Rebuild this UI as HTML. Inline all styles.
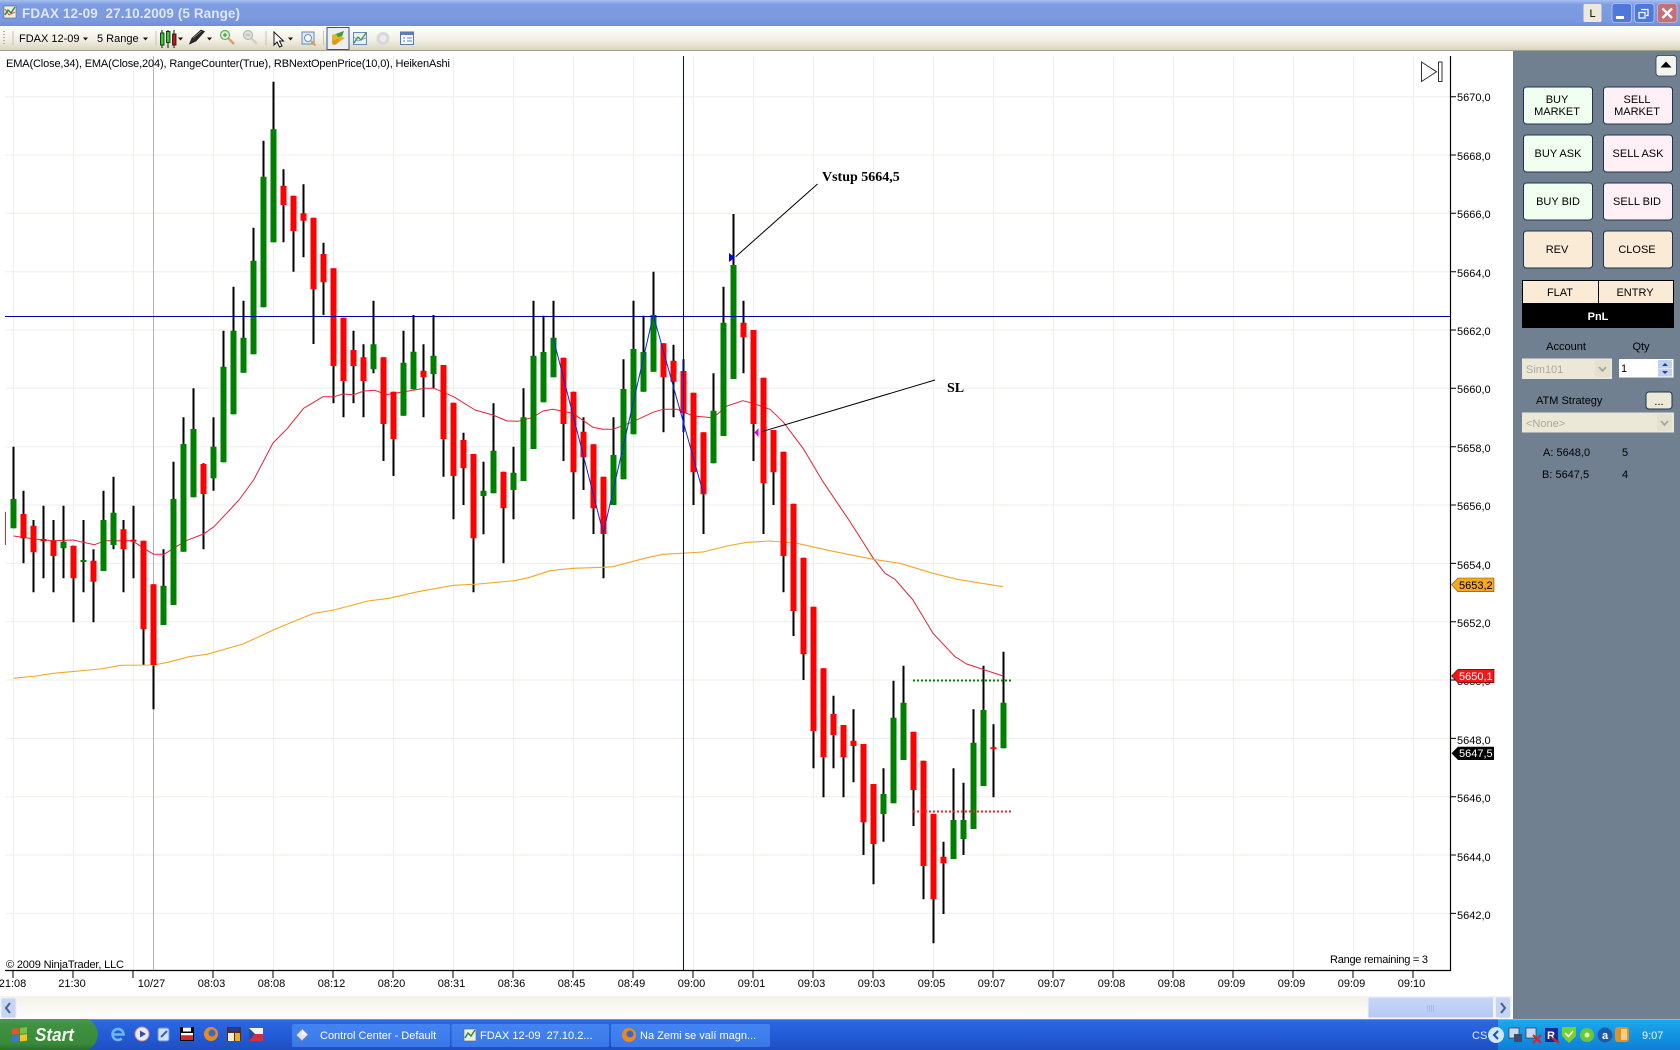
<!DOCTYPE html>
<html>
<head>
<meta charset="utf-8">
<title>FDAX 12-09</title>
<style>
html,body{margin:0;padding:0;background:#fff;width:1680px;height:1050px;overflow:hidden}
svg{display:block;position:absolute;left:0;top:0}
text{font-family:"Liberation Sans",sans-serif;font-size:11px;fill:#000}
.m{text-anchor:middle}
</style>
</head>
<body>
<svg width="1680" height="1050" viewBox="0 0 1680 1050" xmlns="http://www.w3.org/2000/svg">
<defs>
<linearGradient id="tb" x1="0" y1="0" x2="0" y2="1"><stop offset="0" stop-color="#a8c0f0"/><stop offset=".18" stop-color="#7d9ce2"/><stop offset=".8" stop-color="#7a98de"/><stop offset="1" stop-color="#6f8ed8"/></linearGradient>
<linearGradient id="tool" x1="0" y1="0" x2="0" y2="1"><stop offset="0" stop-color="#fefdfa"/><stop offset=".55" stop-color="#f3f1e6"/><stop offset="1" stop-color="#d9d5c2"/></linearGradient>
<linearGradient id="task" x1="0" y1="0" x2="0" y2="1"><stop offset="0" stop-color="#2f71e8"/><stop offset=".12" stop-color="#2a66de"/><stop offset=".5" stop-color="#245cd8"/><stop offset="1" stop-color="#1f4fc0"/></linearGradient>
<linearGradient id="start" x1="0" y1="0" x2="0" y2="1"><stop offset="0" stop-color="#4b9a4b"/><stop offset=".2" stop-color="#3f9040"/><stop offset=".8" stop-color="#398a3a"/><stop offset="1" stop-color="#2a6f2d"/></linearGradient>
<linearGradient id="tray" x1="0" y1="0" x2="0" y2="1"><stop offset="0" stop-color="#1fa9ec"/><stop offset=".5" stop-color="#1296e4"/><stop offset="1" stop-color="#0f7fd6"/></linearGradient>
<linearGradient id="tbtn" x1="0" y1="0" x2="0" y2="1"><stop offset="0" stop-color="#4484f0"/><stop offset="1" stop-color="#3a78ea"/></linearGradient>
<linearGradient id="sb" x1="0" y1="0" x2="0" y2="1"><stop offset="0" stop-color="#f3f1e8"/><stop offset="1" stop-color="#fefefc"/></linearGradient>
<linearGradient id="thumb" x1="0" y1="0" x2="0" y2="1"><stop offset="0" stop-color="#c8d7f7"/><stop offset="1" stop-color="#b5c9f4"/></linearGradient>
</defs>

<rect width="1680" height="1050" fill="#fff"/>

<!-- grid -->
<path d="M5 96.7H1450M5 155H1450M5 213.3H1450M5 271.7H1450M5 330H1450M5 388.3H1450M5 446.7H1450M5 505H1450M5 563.4H1450M5 621.7H1450M5 680H1450M5 738.4H1450M5 796.7H1450M5 855H1450M5 913.4H1450" stroke="#efeee8" stroke-width="1" fill="none"/>
<path d="M13.5 56V970M73.5 56V970M133.5 56V970M213.5 56V970M273.5 56V970M333.5 56V970M393.5 56V970M453.5 56V970M513.5 56V970M573.5 56V970M633.5 56V970M693.5 56V970M753.5 56V970M813.5 56V970M873.5 56V970M933.5 56V970M993.5 56V970M1053.5 56V970M1113.5 56V970M1173.5 56V970M1233.5 56V970M1293.5 56V970M1353.5 56V970M1413.5 56V970" stroke="#efeee8" stroke-width="1" fill="none"/>
<path d="M153.5 56V970" stroke="#b4b4b4" stroke-width="1"/>

<!-- wicks -->
<path fill="none" stroke="#000" stroke-width="2" d="M13.5 446.7V528.3M23.5 490.7V563.3M33.5 520V592.3M43.5 505.7V578.3M53.5 520V592.3M63.5 505.7V578.3M73.5 545.7V622.3M83.5 520V592.3M93.5 549.3V622.3M103.5 490.7V571M113.5 476.7V549.3M123.5 520V592.3M133.5 505.7V578.3M143.5 540.7V665M153.5 584.3V709.3M163.5 549.3V625M173.5 461.7V605M183.5 417.3V551.7M193.5 388.3V497.3M203.5 463.3V549.3M213.5 417.3V490.7M223.5 330.7V462.3M233.5 286.7V414.3M243.5 300.7V372.7M253.5 227.7V354.3M263.5 140.7V307.3M273.5 81.7V242.3M283.5 169.3V242.3M293.5 195.7V271.7M303.5 184.3V257.3M313.5 217.7V344M323.5 242.7V315M333.5 268.3V403.3M343.5 317.7V417.3M353.5 330.7V403.3M363.5 344.3V417.3M373.5 300.7V373.3M383.5 357.3V461M393.5 391.7V476M403.5 330.7V415.7M413.5 315V389.3M423.5 344.3V417.3M433.5 315V388.3M443.5 365V476.7M453.5 402.7V519.3M463.5 432.7V505M473.5 454V592.3M483.5 461.7V534.3M493.5 403.3V493.3M503.5 471.7V563.3M513.5 446.7V519.3M523.5 388.3V481M533.5 300.7V449M543.5 315.7V402.3M553.5 300.7V377.3M563.5 357.7V461M573.5 391.7V519.3M583.5 417.3V490M593.5 444.3V534M603.5 476.7V578.3M613.5 417.3V505M623.5 359.3V479.3M633.5 300.7V434.3M643.5 315.7V391.7M653.5 271.7V371.7M663.5 343.3V432.3M673.5 344.7V417.3M683.5 359.3V432.3M693.5 392.7V505M703.5 432.3V534M713.5 373.3V463.3M723.5 286.7V436M733.5 214V379M743.5 300.7V373.3M753.5 330V461M763.5 377.7V534M773.5 430V505M783.5 451.7V592.3M793.5 503.7V636M803.5 557.7V680M813.5 606.7V768.3M823.5 668.3V797.3M833.5 695.7V768.3M843.5 725V797.3M853.5 709.3V782.3M863.5 744V855M873.5 784V884.3M883.5 768.3V841.7M893.5 680.7V803.3M903.5 665.7V760M913.5 731.7V826M923.5 760.7V899.3M933.5 814V943.3M943.5 841.7V914M953.5 768.3V859M963.5 782.7V855M973.5 709.3V829M983.5 665.7V786M993.5 724.3V797.3M1003.5 651.7V748.3"/>

<!-- EMA lines -->
<path fill="none" stroke="#e2223a" stroke-width="1" stroke-linejoin="round" d="M13.6 536L36 539.3L53.6 540.7L73 540L94.6 544.7L105 540.7L132 540.7L153.6 554.3L164 554.3L186 540.7L203.6 534L214 526.7L239 500L253.6 480L273 443L287.5 428.3L303.6 408.3L323 396.7L334 396.7L343 394L353.6 394.7L364 391L375 390.3L386 394.7L407 391.3L425 388.3L434 388.3L453.6 396.7L475 410L493 415L507 421L518 421.3L532 417.7L543 411L553 409.3L573 413.3L593 427.3L603 429.3L613 429.3L633 421.7L653 412.3L663 409.3L677 409.3L693 416L713 417.7L727 406L743 400.7L753 403.3L770 409.3L783 421.7L803 448.3L823 481.7L850 521.7L861.7 540L873.3 558.3L885 573.3L895 579.3L913 600L933 633.3L955 656.7L966.7 664L1003 676"/>
<path fill="none" stroke="#f2a825" stroke-width="1.1" stroke-linejoin="round" d="M13.6 678.3L36 676L53.6 673.3L100 669L121.4 665.3L153.6 665L168 662.3L189 656.7L207 654.3L243 644L275 629.3L293 621.7L314 613.3L334 610L368 601L389 598.3L418 591.7L453.6 585.3L478.6 584L514 580.7L530 577.3L550 570.7L573 568.3L603 567.3L613 566.7L647 557.7L663 554.3L703 552L727 546L747 542.3L770 541L797 543.3L830 550.7L873 559.3L900 563.3L933 573.3L957 579.3L1003 586.7"/>

<!-- partial bar -->
<path d="M5.5 511.7V545" stroke="#e03030" stroke-width="1"/>

<!-- bodies -->
<path fill="none" stroke="#008000" stroke-width="6" d="M13.5 499V528.3M63.5 541.7V548.3M83.5 560V562M103.5 520V571M113.5 512.7V545M163.5 585.7V625M173.5 499V605M183.5 444V551.7M193.5 429V497.3M213.5 446.7V478.3M223.5 366.7V462.3M233.5 330.7V414.3M243.5 337.7V372.7M253.5 260.7V354.3M263.5 176.7V307.3M273.5 129.3V242.3M373.5 344.3V369.3M403.5 362.7V415.7M413.5 351.7V389.3M433.5 355.7V374M483.5 490.7V496M493.5 450.7V493.3M513.5 472.7V490M523.5 417.3V481M533.5 355.7V449M543.5 352V402.3M553.5 337.7V377.3M613.5 455V505M623.5 389V479.3M633.5 349V434.3M643.5 352V391.7M653.5 315V371.7M713.5 410.7V463.3M723.5 322.7V436M733.5 265V379M883.5 794V814M893.5 717.7V803.3M903.5 702.7V760M953.5 820V859M963.5 820V839M973.5 742.7V829M983.5 710V786M1003.5 702.7V748.3"/>
<path fill="none" stroke="#ff0000" stroke-width="6" d="M23.5 514V538.3M33.5 525.7V552.3M43.5 539V541.3M53.5 540.7V556M73.5 545.7V578.3M93.5 560.7V581.7M123.5 529.3V549.3M133.5 539.7V541.7M143.5 540.7V629.3M153.5 584.3V665M203.5 464V494M283.5 185.7V205M293.5 195.7V231M303.5 213.3V220.7M313.5 217.7V289.3M323.5 254V282.3M333.5 268.3V366M343.5 317.7V381M353.5 350V366M363.5 357.3V381M383.5 357.3V424M393.5 391.7V439M423.5 370.7V377.3M443.5 365V439M453.5 402.7V476M463.5 440V468.3M473.5 454V538.3M503.5 471.7V508.3M563.5 357.7V424M573.5 391.7V472.3M583.5 431.7V457.3M593.5 444.3V508.3M603.5 476.7V534M663.5 343.3V377.3M673.5 360.7V381.7M683.5 371V413.3M693.5 392.7V472.3M703.5 432.3V494.3M743.5 322.7V337.3M753.5 330V424M763.5 377.7V483.3M773.5 430V472.3M783.5 451.7V556M793.5 503.7V611M803.5 557.7V654.3M813.5 606.7V731M823.5 668.3V757.3M833.5 714V735M843.5 725V757.3M853.5 740.7V746M863.5 744V822.3M873.5 784V844M913.5 731.7V790M923.5 760.7V866M933.5 814V899.3M943.5 856.7V863.3M993.5 747.3V749.3"/>

<!-- horizontal and vertical markers -->
<path d="M5 316.5H1450" stroke="#0000a0" stroke-width="1"/>
<path d="M683.5 56V970" stroke="#0000c8" stroke-width="1"/>
<!-- zigzag -->
<path d="M553.3 338.3L603.3 533.3L653.3 315L703.3 493.3" fill="none" stroke="#0a2ae0" stroke-width="1"/>

<!-- dotted lines -->
<path d="M913 680.5H1012" stroke="#008000" stroke-width="2" stroke-dasharray="2 2"/>
<path d="M913 811.5H1012" stroke="#ff2020" stroke-width="2" stroke-dasharray="2 2"/>

<!-- annotations -->
<path d="M735.7 256.7L817.5 184" stroke="#000" stroke-width="1" fill="none"/>
<path d="M761.7 431.7L935 380" stroke="#000" stroke-width="1" fill="none"/>
<path d="M729 253L735 257.5L729 262Z" fill="#0000e0"/>
<path d="M758.5 428L754.5 432.5L758.5 437Z" fill="#e000e0"/>
<text x="822" y="181" style="font-family:'Liberation Serif',serif;font-size:14px;font-weight:bold">Vstup 5664,5</text>
<text x="947" y="392" style="font-family:'Liberation Serif',serif;font-size:14px;font-weight:bold">SL</text>

<!-- indicator text -->
<text x="6" y="67" textLength="444" lengthAdjust="spacing">EMA(Close,34), EMA(Close,204), RangeCounter(True), RBNextOpenPrice(10,0), HeikenAshi</text>
<text x="6" y="968" textLength="118" lengthAdjust="spacing">© 2009 NinjaTrader, LLC</text>
<text x="1330" y="963" textLength="98" lengthAdjust="spacing">Range remaining = 3</text>

<!-- go-to-end icon -->
<path d="M1421.5 62L1436.5 71.8L1421.5 81.5Z" fill="#fff" stroke="#333" stroke-width="1"/>
<rect x="1438.5" y="62" width="3.5" height="19.5" fill="#fff" stroke="#333" stroke-width="1"/>

<!-- axes -->
<path d="M1450.5 56V970.5H5" fill="none" stroke="#000" stroke-width="1.2"/>
<path d="M1451 96.7h5M1451 155h5M1451 213.3h5M1451 271.7h5M1451 330h5M1451 388.3h5M1451 446.7h5M1451 505h5M1451 563.4h5M1451 621.7h5M1451 680h5M1451 738.4h5M1451 796.7h5M1451 855h5M1451 913.4h5" stroke="#000" stroke-width="1"/>
<g>
<text x="1457" y="101">5670,0</text><text x="1457" y="160">5668,0</text><text x="1457" y="218">5666,0</text><text x="1457" y="277">5664,0</text><text x="1457" y="335">5662,0</text><text x="1457" y="393">5660,0</text><text x="1457" y="452">5658,0</text><text x="1457" y="510">5656,0</text><text x="1457" y="569">5654,0</text><text x="1457" y="627">5652,0</text><text x="1457" y="685">5650,0</text><text x="1457" y="744">5648,0</text><text x="1457" y="802">5646,0</text><text x="1457" y="861">5644,0</text><text x="1457" y="919">5642,0</text>
</g>
<!-- price markers -->
<path d="M1451.5 584.8L1458 578H1494V591.7H1458Z" fill="#f5a623" stroke="#7a5200" stroke-width=".6"/>
<text x="1459" y="589">5653,2</text>
<path d="M1451.5 676L1458 669.3H1494V682.7H1458Z" fill="#f01818" stroke="#500" stroke-width=".6"/>
<text x="1459" y="680" style="fill:#fff">5650,1</text>
<path d="M1451.5 753.3L1458 746.7H1494V760H1458Z" fill="#000"/>
<text x="1459" y="757" style="fill:#fff">5647,5</text>

<!-- x axis ticks and labels -->
<path d="M13 971v7M73 971v7M133 971v7M213 971v7M273 971v7M333 971v7M393 971v7M453 971v7M513 971v7M573 971v7M633 971v7M693 971v7M753 971v7M813 971v7M873 971v7M933 971v7M993 971v7M1053 971v7M1113 971v7M1173 971v7M1233 971v7M1293 971v7M1353 971v7M1413 971v7" stroke="#000" stroke-width="1"/>
<g class="m" text-anchor="middle">
<text x="12.5" y="987">21:08</text><text x="72" y="987">21:30</text><text x="151.5" y="987">10/27</text><text x="211.5" y="987">08:03</text><text x="271.5" y="987">08:08</text><text x="331.5" y="987">08:12</text><text x="391.5" y="987">08:20</text><text x="451.5" y="987">08:31</text><text x="511.5" y="987">08:36</text><text x="571.5" y="987">08:45</text><text x="631.5" y="987">08:49</text><text x="691.5" y="987">09:00</text><text x="751.5" y="987">09:01</text><text x="811.5" y="987">09:03</text><text x="871.5" y="987">09:03</text><text x="931.5" y="987">09:05</text><text x="991.5" y="987">09:07</text><text x="1051.5" y="987">09:07</text><text x="1111.5" y="987">09:08</text><text x="1171.5" y="987">09:08</text><text x="1231.5" y="987">09:09</text><text x="1291.5" y="987">09:09</text><text x="1351.5" y="987">09:09</text><text x="1411.5" y="987">09:10</text>
</g>

<!-- scrollbar -->
<rect x="0" y="996" width="1512" height="23" fill="url(#sb)"/>
<rect x="1" y="998" width="15" height="20" rx="2" fill="#c6d5f3" stroke="#e8eefb"/>
<path d="M10 1003L6 1008L10 1013" fill="none" stroke="#4d6185" stroke-width="2"/>
<rect x="1368" y="997" width="125.5" height="21" rx="1" fill="url(#thumb)" stroke="#eef2fc"/>
<path d="M1427.5 1005v7M1429.5 1005v7M1431.5 1005v7M1433.5 1005v7" stroke="#a8bce8" stroke-width="1"/>
<rect x="1495.5" y="997" width="15" height="21" rx="2" fill="#c6d5f3" stroke="#e8eefb"/>
<path d="M1501 1003L1505 1008L1501 1013" fill="none" stroke="#4d6185" stroke-width="2"/>

<!-- title bar -->
<rect x="0" y="0" width="1680" height="26" fill="url(#tb)"/>
<rect x="4" y="6" width="12" height="12" fill="#e8f0e0" stroke="#667" stroke-width=".6"/>
<path d="M5 15L8 10L11 13L15 7" fill="none" stroke="#2a8a3a" stroke-width="1.4"/>
<path d="M5 9L9 15L15 12" fill="none" stroke="#d33" stroke-width=".8"/>
<text x="22" y="18" textLength="218" lengthAdjust="spacing" style="font-size:13.5px;font-weight:bold;fill:#dfe8fb" xml:space="preserve">FDAX 12-09  27.10.2009 (5 Range)</text>
<rect x="1583.5" y="4" width="18" height="18" rx="1.5" fill="#ece9d8"/>
<text x="1592.5" y="17" text-anchor="middle">L</text>
<rect x="1612" y="3.5" width="19.5" height="19" rx="3" fill="#4f78d8" stroke="#b6c9f2" stroke-width=".8"/>
<rect x="1616" y="16" width="8" height="3" fill="#fff"/>
<rect x="1634.5" y="3.5" width="19.5" height="19" rx="3" fill="#4f78d8" stroke="#b6c9f2" stroke-width=".8"/>
<path d="M1641 9.5h7v6h-2M1639 12.5h6v5.5h-6z" fill="none" stroke="#fff" stroke-width="1.2"/>
<rect x="1657.5" y="3.5" width="19.5" height="19" rx="3" fill="#c4707c" stroke="#e0b8c0" stroke-width=".8"/>
<path d="M1662.5 8.5L1672 18M1672 8.5L1662.5 18" stroke="#fff" stroke-width="2.4"/>

<!-- toolbar -->
<rect x="0" y="26" width="1680" height="24" fill="url(#tool)"/>
<rect x="0" y="50" width="1680" height="1" fill="#a5a18d"/>
<path d="M4 31v1M4 34v1M4 37v1M4 40v1M4 43v1" stroke="#b5b19e" stroke-width="2"/>
<path d="M13 31V45M156 31V45M266 31V45M323.5 31V45" stroke="#c8c4b0" stroke-width="1"/>
<text x="19" y="42">FDAX 12-09</text>
<text x="97" y="42">5 Range</text>
<path d="M83 37.5h5l-2.5 3zM143 37.5h5l-2.5 3zM178 37.5h5l-2.5 3zM207 37.5h5l-2.5 3zM288 37.5h5l-2.5 3z" fill="#111"/>
<!-- candles icon -->
<path d="M162 30v18M168 30v18M174 30v18" stroke="#111" stroke-width="1"/>
<rect x="160.5" y="33" width="3.5" height="12" fill="#2fd02f" stroke="#111" stroke-width=".8"/>
<rect x="166.5" y="31.5" width="3.5" height="11" fill="#2fd02f" stroke="#111" stroke-width=".8"/>
<rect x="172.5" y="34" width="3.5" height="11" fill="#c01818" stroke="#111" stroke-width=".8"/>
<!-- pencil -->
<path d="M189.5 44L192 38L201 30L204.5 31.5L196 41Z" fill="#2a2a2a" stroke="#111" stroke-width=".6"/>
<path d="M193 38L201.5 31" stroke="#999" stroke-width=".8"/>
<!-- zoom in -->
<circle cx="225" cy="35" r="4.5" fill="#d8efd0" stroke="#6aa870" stroke-width="1.2"/>
<path d="M223 35h4M225 33v4" stroke="#2a8a2a" stroke-width="1"/>
<path d="M228.5 38.5L234 44" stroke="#e0a060" stroke-width="2.4"/>
<!-- zoom out -->
<circle cx="248" cy="35" r="4.5" fill="#dededa" stroke="#b8b8b4" stroke-width="1.2"/>
<path d="M246 35h4" stroke="#aaa" stroke-width="1"/>
<path d="M251.5 38.5L257 44" stroke="#cfcfc8" stroke-width="2.4"/>
<!-- cursor -->
<path d="M274 32V45L277 42L279.5 47L282 46L279.5 41L283.5 41Z" fill="#fff" stroke="#111" stroke-width="1"/>
<!-- preview -->
<rect x="302" y="32" width="12" height="12" fill="#dfe9f5" stroke="#6a87ad" stroke-width="1"/>
<circle cx="308" cy="38" r="3.5" fill="#f5f8fc" stroke="#7590b5" stroke-width="1"/>
<path d="M311 41L315.5 45.5" stroke="#e09a50" stroke-width="2"/>
<!-- toggled -->
<rect x="327" y="27.500" width="22" height="22" fill="#eceef2" stroke="#31568c" stroke-width="1"/>
<path d="M332 35L344 31L342 37L345 38L335 45L332 44Z" fill="#e2b528"/>
<path d="M336 34L344 31L342 36L338 37Z" fill="#3aa03a"/>
<path d="M332 41L340 38L338 43L333 45Z" fill="#d89a20"/>
<!-- chart -->
<rect x="353.5" y="32.5" width="13" height="12" fill="#eaf1fa" stroke="#6d88b5" stroke-width="1"/>
<path d="M354 43L358 37L361 40L366 33" fill="none" stroke="#2e9a3e" stroke-width="1.3"/>
<path d="M354 37L358 41L366 38" fill="none" stroke="#7a7ad0" stroke-width=".7"/>
<!-- circle -->
<circle cx="383" cy="38.5" r="6.5" fill="#d8d8d6"/>
<circle cx="383" cy="38.5" r="3.5" fill="#ebebe9"/>
<!-- grid -->
<rect x="400.5" y="32" width="13" height="12.5" fill="#f6f8fc" stroke="#5a77a5" stroke-width="1"/>
<rect x="401" y="32.5" width="12" height="2.5" fill="#5a80c0"/>
<path d="M403 38h2M403 41h2M407 38h5M407 41h5" stroke="#6d85aa" stroke-width="1"/>

<!-- right panel -->
<rect x="1513" y="51" width="167" height="968" fill="#708090"/>
<rect x="1656" y="55.5" width="20.5" height="20.5" rx="3" fill="#f5f5f0" stroke="#2b3c50" stroke-width=".8"/>
<path d="M1660.5 67.5h11l-5.5 -6z" fill="#000"/>

<g stroke="#1f3350" stroke-width="1">
<rect x="1523.5" y="87" width="69" height="37" rx="3" fill="#f0fff0"/>
<rect x="1603.5" y="87" width="69" height="37" rx="3" fill="#fff0f5"/>
<rect x="1523.5" y="135" width="69" height="37" rx="3" fill="#f0fff0"/>
<rect x="1603.5" y="135" width="69" height="37" rx="3" fill="#fff0f5"/>
<rect x="1523.5" y="183" width="69" height="37" rx="3" fill="#f0fff0"/>
<rect x="1603.5" y="183" width="69" height="37" rx="3" fill="#fff0f5"/>
<rect x="1523.5" y="231" width="69" height="37" rx="3" fill="#faebd7"/>
<rect x="1603.5" y="231" width="69" height="37" rx="3" fill="#faebd7"/>
</g>
<g text-anchor="middle">
<text x="1557" y="103">BUY</text><text x="1557" y="115">MARKET</text>
<text x="1637" y="103">SELL</text><text x="1637" y="115">MARKET</text>
<text x="1558" y="157">BUY ASK</text><text x="1638" y="157">SELL ASK</text>
<text x="1558" y="205">BUY BID</text><text x="1637" y="205">SELL BID</text>
<text x="1557" y="253">REV</text><text x="1637" y="253">CLOSE</text>
</g>

<rect x="1522" y="280" width="152" height="48" fill="#000"/>
<rect x="1523" y="281" width="75" height="22" fill="#faebd7"/>
<rect x="1599" y="281" width="74" height="22" fill="#faebd7"/>
<text x="1560" y="296" text-anchor="middle">FLAT</text>
<text x="1635" y="296" text-anchor="middle">ENTRY</text>
<text x="1598" y="320" text-anchor="middle" style="fill:#fff;font-weight:bold">PnL</text>

<text x="1566" y="350" text-anchor="middle">Account</text>
<text x="1641" y="350" text-anchor="middle">Qty</text>
<rect x="1522" y="358.5" width="90" height="20.5" fill="#ebe8d8"/>
<text x="1526" y="373" style="fill:#aca899">Sim101</text>
<rect x="1595" y="360" width="15" height="17" fill="#e4e1d0"/>
<path d="M1599 367L1602.5 371L1606 367" fill="none" stroke="#aca899" stroke-width="1.8"/>
<rect x="1619" y="359" width="54.5" height="18.5" fill="#fff"/>
<text x="1621" y="372">1</text>
<rect x="1658" y="360" width="14" height="8" fill="#c0d0f0"/>
<rect x="1658" y="368.5" width="14" height="8" fill="#c0d0f0"/>
<path d="M1662 366l3 -3l3 3zM1662 371l3 3l3 -3z" fill="#23427a"/>

<text x="1536" y="404">ATM Strategy</text>
<rect x="1646" y="392" width="26" height="17" rx="3" fill="#ece9d8" stroke="#1f3350" stroke-width="1"/>
<text x="1659" y="405" text-anchor="middle">...</text>
<rect x="1522" y="412.5" width="152" height="20" fill="#ebe8d8"/>
<text x="1526" y="427" style="fill:#aca899">&lt;None&gt;</text>
<rect x="1657" y="414" width="15" height="17" fill="#e4e1d0"/>
<path d="M1661 421L1664.5 425L1668 421" fill="none" stroke="#aca899" stroke-width="1.8"/>
<text x="1543" y="456">A: 5648,0</text><text x="1622" y="456">5</text>
<text x="1542" y="478">B: 5647,5</text><text x="1622" y="478">4</text>

<!-- taskbar -->
<rect x="0" y="1019" width="1680" height="31" fill="url(#task)"/>
<rect x="0" y="1019" width="1680" height="1" fill="#5a94f0"/>
<path d="M0 1019H88Q97 1024 98 1034Q97 1045 88 1050H0Z" fill="url(#start)"/>
<rect x="12" y="1028" width="7" height="6" fill="#e8542a" transform="skewY(-6) translate(0 2)"/>
<rect x="20" y="1026" width="7" height="6" fill="#7cc142" transform="skewY(-6) translate(0 4)"/>
<rect x="12" y="1035" width="7" height="6.5" fill="#3a78d8" transform="skewY(-6) translate(0 2)"/>
<rect x="20" y="1033" width="7" height="6.5" fill="#f4c420" transform="skewY(-6) translate(0 4)"/>
<text x="35" y="1041" textLength="39" lengthAdjust="spacingAndGlyphs" style="font-size:18px;font-style:italic;font-weight:bold;fill:#f2f6ee">Start</text>

<!-- quick launch -->
<path d="M112.5 1034.5h11a5.5 5.5 0 1 0 -1.800 4" fill="none" stroke="#6fb6f2" stroke-width="2.600"/>
<circle cx="142" cy="1034" r="7" fill="#e8eaf8"/><path d="M140 1030.5L146 1034L140 1037.5Z" fill="#3a48b0"/><circle cx="142" cy="1034" r="7" fill="none" stroke="#d08890" stroke-width="1"/>
<rect x="158" y="1028" width="11" height="13" rx="2" fill="#cfe2f8" stroke="#6a8ed0"/><path d="M161 1037L167 1031" stroke="#3a60b0" stroke-width="2"/>
<rect x="180" y="1027" width="14" height="14" fill="#000"/><rect x="183" y="1027.5" width="8" height="4" fill="#fff"/><rect x="181" y="1033" width="12" height="2.5" fill="#fff"/><rect x="181" y="1036" width="12" height="4" fill="#d82828"/>
<circle cx="211" cy="1034" r="7" fill="#e88a20"/><circle cx="212" cy="1033" r="3.5" fill="#3a6ac8"/>
<rect x="227" y="1027" width="14" height="14" fill="#5a2a1a"/><rect x="228" y="1033" width="6" height="8" fill="#f3ead0"/><rect x="235" y="1033" width="5" height="8" fill="#e0b030"/><rect x="229" y="1028" width="10" height="3" fill="#2a3a90"/>
<rect x="249" y="1028" width="14" height="13" fill="#f4f4f4"/><rect x="249" y="1034" width="14" height="7" fill="#d03040"/><path d="M249 1028L255 1034L249 1041Z" fill="#2a4aa0"/>

<!-- task buttons -->
<rect x="292" y="1024" width="158" height="23" rx="2" fill="url(#tbtn)"/>
<rect x="451.5" y="1024" width="157.5" height="23" rx="2" fill="url(#tbtn)"/>
<rect x="611" y="1024" width="159" height="23" rx="2" fill="url(#tbtn)"/>
<path d="M302 1029L308 1035L302 1041L296 1035Z" fill="#dfe4ea" stroke="#7088a8" stroke-width="1"/>
<path d="M302 1029L308 1035L302 1035Z" fill="#f4f6fa"/>
<rect x="464" y="1029" width="12" height="12" fill="#e8f0e0" stroke="#667" stroke-width=".6"/>
<path d="M465 1038L468 1033L471 1036L475 1030" fill="none" stroke="#2a8a3a" stroke-width="1.4"/>
<circle cx="629" cy="1035" r="7" fill="#e88a20"/><circle cx="630" cy="1034" r="3.5" fill="#3a6ac8"/>
<text x="320" y="1039" style="fill:#fff">Control Center - Default</text>
<text x="480" y="1039" style="fill:#fff" xml:space="preserve">FDAX 12-09  27.10.2...</text>
<text x="640" y="1039" style="fill:#fff">Na Zemi se valí magn...</text>

<!-- tray -->
<rect x="1498" y="1019" width="182" height="31" fill="url(#tray)"/>
<rect x="1498" y="1019" width="182" height="1" fill="#6cc4f2"/>
<text x="1472" y="1039" style="fill:#dfe9fb">CS</text>
<circle cx="1496" cy="1035" r="8" fill="#cfe8fb"/>
<path d="M1498 1031L1494 1035L1498 1039" fill="none" stroke="#1a4fb0" stroke-width="2"/>
<rect x="1509" y="1028" width="10" height="10" fill="#c8d8f0" stroke="#334" stroke-width=".7"/><rect x="1514" y="1034" width="8" height="8" fill="#3a4a70"/>
<rect x="1526" y="1028" width="10" height="10" fill="#c8d8f0" stroke="#334" stroke-width=".7"/><path d="M1533 1035L1541 1043M1541 1035L1533 1043" stroke="#e02020" stroke-width="2"/>
<rect x="1545" y="1028" width="13" height="14" fill="#1a2a90"/><text x="1547" y="1039" style="fill:#fff;font-weight:bold">R</text><path d="M1552 1038L1559 1043" stroke="#e02020" stroke-width="2"/>
<path d="M1562 1027h14v9l-7 7l-7 -7z" fill="#7ad030"/><path d="M1565 1033L1568.5 1036.5L1573 1031" stroke="#fff" stroke-width="1.5" fill="none"/>
<circle cx="1587" cy="1035" r="7" fill="#6cc83a"/><circle cx="1587" cy="1035" r="2.5" fill="#e8f4a0"/>
<circle cx="1605" cy="1035" r="7.5" fill="#1e5aa8"/><text x="1605" y="1039" text-anchor="middle" style="fill:#fff;font-weight:bold">a</text>
<rect x="1615" y="1027" width="14" height="15" rx="3" fill="#e0902a"/><rect x="1621" y="1029" width="6" height="11" fill="#f6d080"/>
<text x="1642" y="1039" style="fill:#f0f6ff">9:07</text>
</svg>
</body>
</html>
